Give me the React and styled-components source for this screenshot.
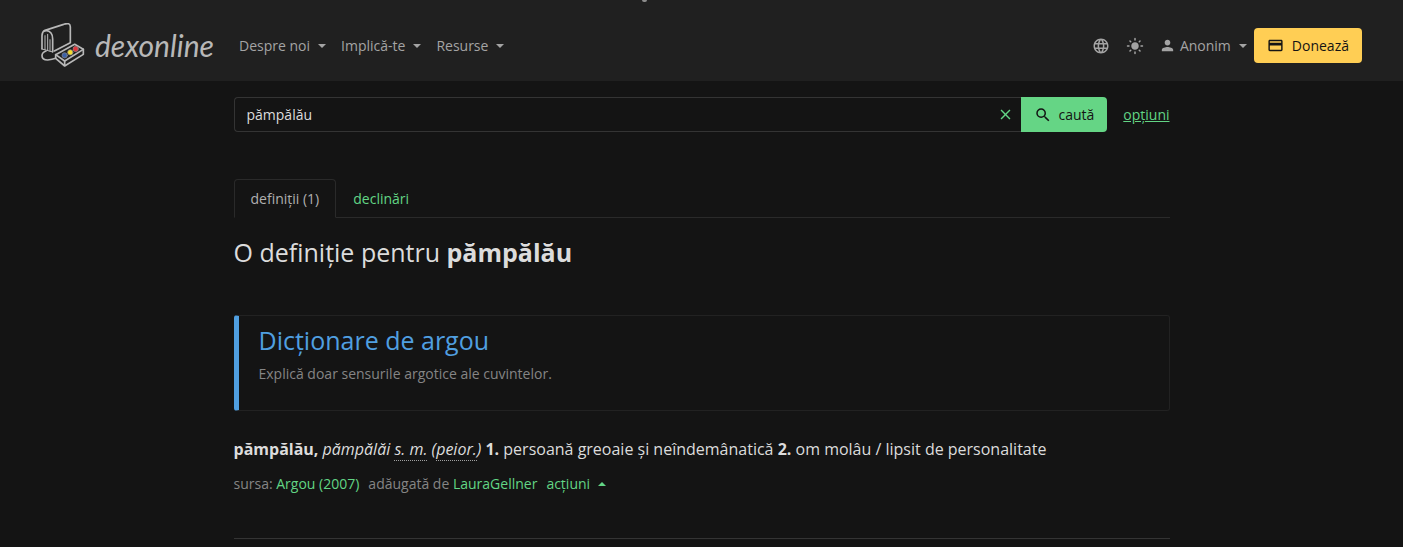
import React from 'react'
import styled, { createGlobalStyle } from 'styled-components'
import {
    MdLanguage,
    MdLightMode,
    MdPerson,
    MdCreditCard,
    MdSearch,
    MdClear,
} from 'react-icons/md'

const menus = ['Despre noi', 'Implică-te', 'Resurse']

function Logo() {
    return (
        <LogoLink href="#">
            <svg width="44" height="45" viewBox="0 0 132 135" fill="none" stroke="#b8b8b8" strokeWidth="5" strokeLinejoin="round" strokeLinecap="round">
                <path d="M3 78V38Q3 27 12 22L68 4Q88-3 88 12V59L40 84" />
                <path d="M10 24Q22 20 30 30Q35 36 35 48V86" />
                <path d="M12 38V80M20 34V82M27 50V84" strokeWidth="3" />
                <path d="M3 78L14 81L35 87" strokeWidth="3" />
                <path d="M15 84Q3 88 3 98Q3 110 20 111Q34 110 44 106" />
                <path d="M44 95L101 64L127 79L71 114Z" />
                <path d="M44 95V106L71 129L127 94V79M71 114V129" />
                <circle cx="71" cy="97" r="8" fill="#3d62a8" strokeWidth="2" stroke="#8b8b8b" />
                <circle cx="88" cy="88" r="8" fill="#f4dc2c" strokeWidth="2" stroke="#8b8b8b" />
                <circle cx="104" cy="78" r="8" fill="#e2353b" strokeWidth="2" stroke="#8b8b8b" />
            </svg>
            <LogoText>dexonline</LogoText>
        </LogoLink>
    )
}

function App() {
    return (
        <>
            <GlobalStyle />
            <Navbar>
                <Notch />
                <Logo />
                <Menu>
                    {menus.map((item) => (
                        <NavButton key={item}>
                            {item}
                            <Caret />
                        </NavButton>
                    ))}
                </Menu>
                <IconButton aria-label="Limba"><MdLanguage size={18} /></IconButton>
                <IconButton aria-label="Tema"><MdLightMode size={18} /></IconButton>
                <NavButton>
                    <MdPerson size={17} />
                    <UserName>Anonim</UserName>
                    <Caret />
                </NavButton>
                <Donate>
                    <MdCreditCard size={17} />
                    Donează
                </Donate>
            </Navbar>

            <Content>
                <SearchForm onSubmit={(e) => e.preventDefault()}>
                    <SearchBox>
                        <SearchInput type="text" aria-label="cuvânt" defaultValue="pămpălău" />
                        <ClearButton type="button" aria-label="șterge"><MdClear size={17} /></ClearButton>
                    </SearchBox>
                    <SearchButton type="submit">
                        <MdSearch size={18} />
                        caută
                    </SearchButton>
                    <Options href="#">opțiuni</Options>
                </SearchForm>

                <Tabs role="tablist">
                    <Tab role="tab" aria-selected="true" $active>definiții (1)</Tab>
                    <Tab role="tab" aria-selected="false">declinări</Tab>
                </Tabs>

                <Title>O definiție pentru <b>pămpălău</b></Title>

                <Category>
                    <CategoryTitle>Dicționare de argou</CategoryTitle>
                    <CategoryText>Explică doar sensurile argotice ale cuvintelor.</CategoryText>
                </Category>

                <Definition>
                    <b>pămpălău,</b>{' '}
                    <i>pămpălăi <Abbr>s. m.</Abbr> (<Abbr>peior.</Abbr>)</i>{' '}
                    <b>1.</b> persoană greoaie și neîndemânatică <b>2.</b> om molâu / lipsit de personalitate
                </Definition>
                <Source>
                    <span>sursa: <GreenLink href="#">Argou (2007)</GreenLink></span>
                    <span>adăugată de <GreenLink href="#">LauraGellner</GreenLink></span>
                    <Actions>
                        acțiuni
                        <Caret $up />
                    </Actions>
                </Source>
                <Divider />
            </Content>
        </>
    )
}

export default App

const GlobalStyle = createGlobalStyle`
    * {
        box-sizing: border-box;
    }
    body {
        margin: 0;
        background: #141414;
        color: #dcdcdc;
        font-family: "Open Sans", "Noto Sans", sans-serif;
        font-size: 14px;
        line-height: 21px;
    }
    button, input {
        font: inherit;
        color: inherit;
        background: none;
        border: 0;
        padding: 0;
        margin: 0;
    }
    button {
        cursor: pointer;
    }
`

const Navbar = styled.nav`
    position: relative;
    display: flex;
    align-items: center;
    height: 81px;
    padding: 10px 41px 0;
    background: #202020;
    color: #a4a4a4;
`

const Notch = styled.span`
    position: absolute;
    top: 0;
    left: 46%;
    width: 5px;
    height: 2px;
    margin-left: -3px;
    border-radius: 0 0 3px 3px;
    background: #8c8c8c;
`

const LogoLink = styled.a`
    display: flex;
    align-items: center;
    gap: 10px;
    width: 191px;
    color: #b8b8b8;
    text-decoration: none;
`

const LogoText = styled.span`
    font-family: Lato, "Open Sans", sans-serif;
    font-size: 30px;
    font-style: italic;
    font-weight: 400;
    line-height: 35px;
`

const Menu = styled.div`
    display: flex;
    flex: 1;
    gap: 1px;
`

const NavButton = styled.button`
    display: flex;
    align-items: center;
    padding: 7px;
    white-space: nowrap;
`

const UserName = styled.span`
    margin-left: 4px;
`

const Caret = styled.span`
    margin-left: 8px;
    border: 4px solid transparent;
    border-top-color: ${props => props.$up ? 'transparent' : 'currentColor'};
    border-bottom-color: ${props => props.$up ? 'currentColor' : 'transparent'};
    border-top-width: ${props => props.$up ? '0' : '4px'};
    border-bottom-width: ${props => props.$up ? '4px' : '0'};
`

const IconButton = styled.button`
    display: grid;
    place-items: center;
    padding: 8px;
`

const Donate = styled.button`
    display: flex;
    align-items: center;
    justify-content: center;
    gap: 8px;
    height: 35px;
    padding: 0 13px;
    border-radius: 4px;
    background: #ffce54;
    color: #141414;
`

const Content = styled.main`
    max-width: 936px;
    margin: 16px auto 0;
`

const SearchForm = styled.form`
    display: flex;
    align-items: center;
`

const SearchBox = styled.div`
    display: flex;
    flex: 1;
    height: 35px;
    border: 1px solid #343434;
    border-right: 0;
    border-radius: 4px 0 0 4px;
`

const SearchInput = styled.input`
    flex: 1;
    min-width: 0;
    padding: 0 12px;
    outline: 0;
`

const ClearButton = styled.button`
    display: grid;
    place-items: center;
    width: 32px;
    color: #62d585;
`

const SearchButton = styled.button`
    display: flex;
    align-items: center;
    gap: 6px;
    height: 35px;
    padding: 0 13px;
    border-radius: 0 4px 4px 0;
    background: #65d585;
    color: #141414;
`

const Options = styled.a`
    margin-left: 16px;
    color: #62d585;
`

const Tabs = styled.div`
    display: flex;
    margin-top: 47px;
    border-bottom: 1px solid #2a2a2a;
`

const Tab = styled.button`
    margin-bottom: -1px;
    padding: 8px 16px;
    border: 1px solid ${props => props.$active ? '#2a2a2a' : 'transparent'};
    border-bottom-color: ${props => props.$active ? '#141414' : 'transparent'};
    border-radius: 4px 4px 0 0;
    color: ${props => props.$active ? '#b0b0b0' : '#62d585'};
`

const Title = styled.h1`
    margin: 19px 0 0;
    font-size: 25px;
    font-weight: 400;
    line-height: 30px;
`

const Category = styled.section`
    margin-top: 48px;
    padding: 9px 20px 26px;
    border: 1px solid #222;
    border-left: 5px solid #509fe0;
    border-radius: 3px;
`

const CategoryTitle = styled.h2`
    margin: 0;
    color: #509fe0;
    font-size: 25px;
    font-weight: 400;
    line-height: 30px;
`

const CategoryText = styled.p`
    margin: 8px 0 0;
    color: #858585;
`

const Definition = styled.p`
    margin: 26px 0 0;
    font-size: 16px;
    line-height: 25px;
`

const Abbr = styled.span`
    border-bottom: 1px dotted #a0a0a0;
`

const Source = styled.div`
    display: flex;
    gap: 9px;
    margin-top: 11px;
    color: #858585;
`

const GreenLink = styled.a`
    color: #62d585;
    text-decoration: none;
`

const Actions = styled.button`
    display: flex;
    align-items: center;
    color: #62d585;
`

const Divider = styled.hr`
    margin: 44px 0 0;
    border: 0;
    border-top: 1px solid #343434;
`
